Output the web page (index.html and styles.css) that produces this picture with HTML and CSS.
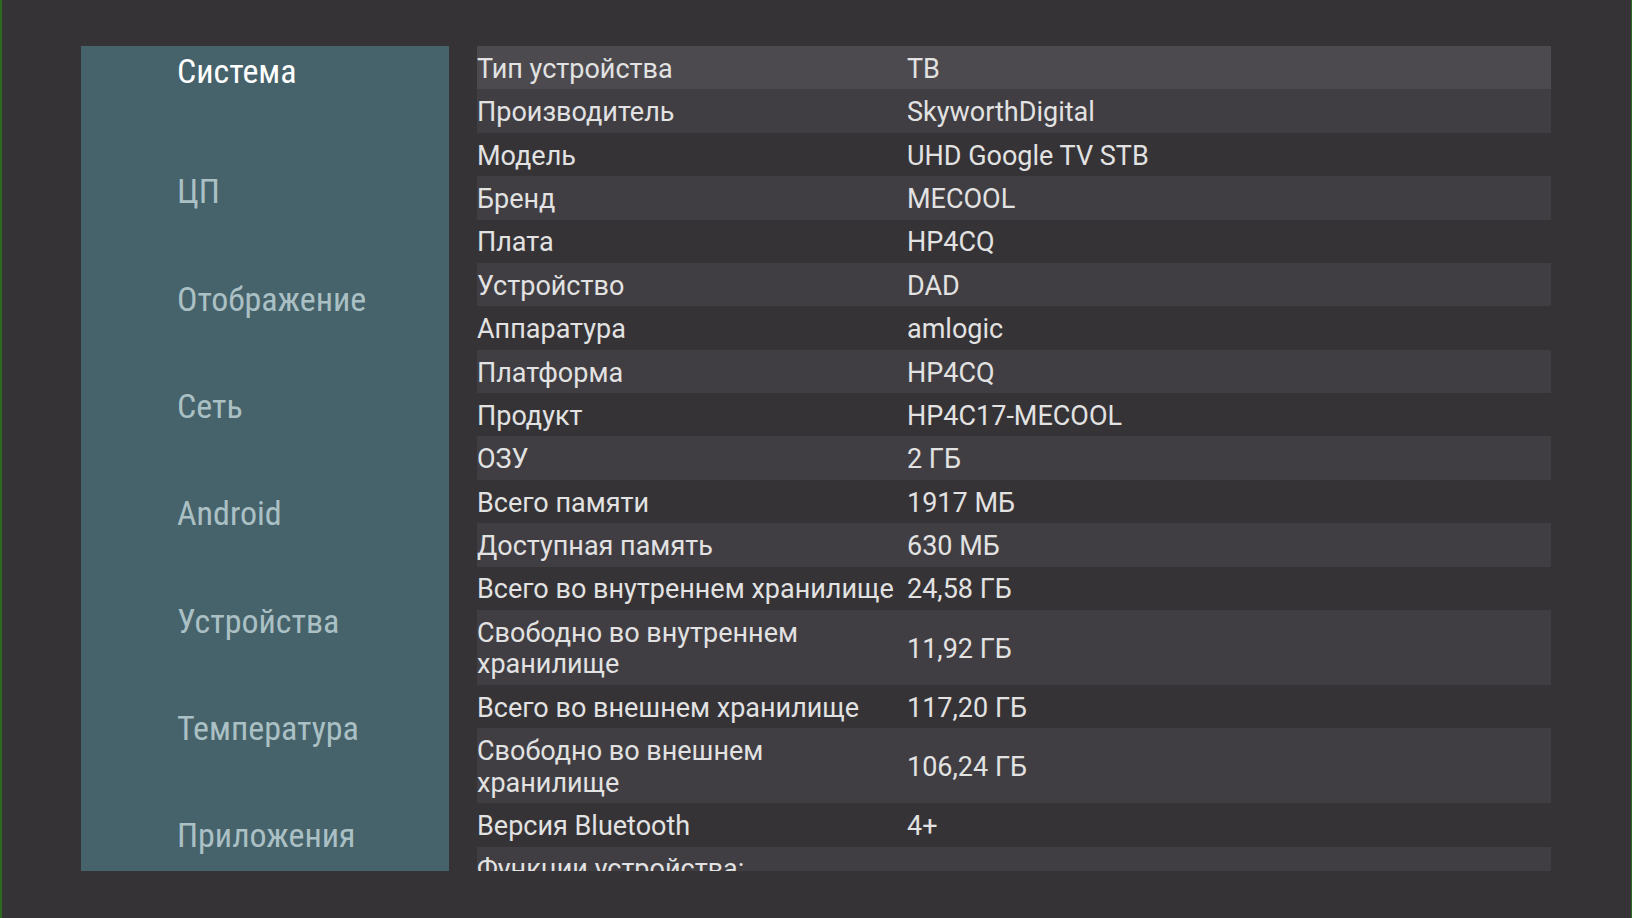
FILE: index.html
```html
<!DOCTYPE html>
<html lang="ru">
<head>
<meta charset="utf-8">
<title>Система</title>
<link rel="stylesheet" href="styles.css">
</head>
<body>
<div class="screen">
  <nav class="sidebar">
    <div class="nav-item active">Система</div>
    <div class="nav-item">ЦП</div>
    <div class="nav-item">Отображение</div>
    <div class="nav-item">Сеть</div>
    <div class="nav-item">Android</div>
    <div class="nav-item">Устройства</div>
    <div class="nav-item">Температура</div>
    <div class="nav-item">Приложения</div>
  </nav>
  <div class="table">
    <div class="row selected"><div class="label">Тип устройства</div><div class="value">ТВ</div></div>
    <div class="row"><div class="label">Производитель</div><div class="value">SkyworthDigital</div></div>
    <div class="row"><div class="label">Модель</div><div class="value">UHD Google TV STB</div></div>
    <div class="row"><div class="label">Бренд</div><div class="value">MECOOL</div></div>
    <div class="row"><div class="label">Плата</div><div class="value">HP4CQ</div></div>
    <div class="row"><div class="label">Устройство</div><div class="value">DAD</div></div>
    <div class="row"><div class="label">Аппаратура</div><div class="value">amlogic</div></div>
    <div class="row"><div class="label">Платформа</div><div class="value">HP4CQ</div></div>
    <div class="row"><div class="label">Продукт</div><div class="value">HP4C17-MECOOL</div></div>
    <div class="row"><div class="label">ОЗУ</div><div class="value">2 ГБ</div></div>
    <div class="row"><div class="label">Всего памяти</div><div class="value">1917 МБ</div></div>
    <div class="row"><div class="label">Доступная память</div><div class="value">630 МБ</div></div>
    <div class="row"><div class="label">Всего во внутреннем хранилище</div><div class="value">24,58 ГБ</div></div>
    <div class="row"><div class="label">Свободно во внутреннем хранилище</div><div class="value">11,92 ГБ</div></div>
    <div class="row"><div class="label">Всего во внешнем хранилище</div><div class="value">117,20 ГБ</div></div>
    <div class="row"><div class="label">Свободно во внешнем хранилище</div><div class="value">106,24 ГБ</div></div>
    <div class="row"><div class="label">Версия Bluetooth</div><div class="value">4+</div></div>
    <div class="row"><div class="label">Функции устройства:</div><div class="value"></div></div>
  </div>
</div>
</body>
</html>
```

FILE: styles.css
```css
html, body {
  margin: 0;
  padding: 0;
  background: #353336;
}

.screen {
  box-sizing: border-box;
  width: 1632px;
  height: 918px;
  border-left: 2px solid #2b6a20;
  border-right: 1px solid #2b6a20;
  background: #353336;
  display: flex;
  align-items: flex-start;
  padding: 46px 0 0 79px;
  gap: 28px;
  overflow: hidden;
}

.sidebar {
  width: 368px;
  height: 825px;
  flex: none;
  background: #46636b;
  display: flex;
  flex-direction: column;
  gap: 67.3px;
  padding-left: 96px;
  box-sizing: border-box;
  font-family: "Roboto Condensed", "Liberation Sans Narrow", "Roboto", sans-serif;
  font-stretch: condensed;
  font-size: 34px;
}

.nav-item {
  line-height: 40px;
  height: 40px;
  color: #abc0c4;
  white-space: nowrap;
}

.nav-item.active {
  color: #ffffff;
  margin-top: 4.8px;
  margin-bottom: 13.4px;
}

.table {
  width: 1074px;
  height: 825px;
  flex: none;
  overflow: hidden;
  font-family: "Roboto", "Noto Sans", sans-serif;
  font-size: 27px;
  color: #e2e2e2;
}

.row {
  display: grid;
  grid-template-columns: 430px 1fr;
  align-items: center;
  padding: 7.9px 0 3.9px;
  line-height: 31.6px;
}

.row:nth-child(even) {
  background: #403e42;
}

.row.selected {
  background: #4c4a4e;
}

.label {
  padding-right: 6px;
}
```
